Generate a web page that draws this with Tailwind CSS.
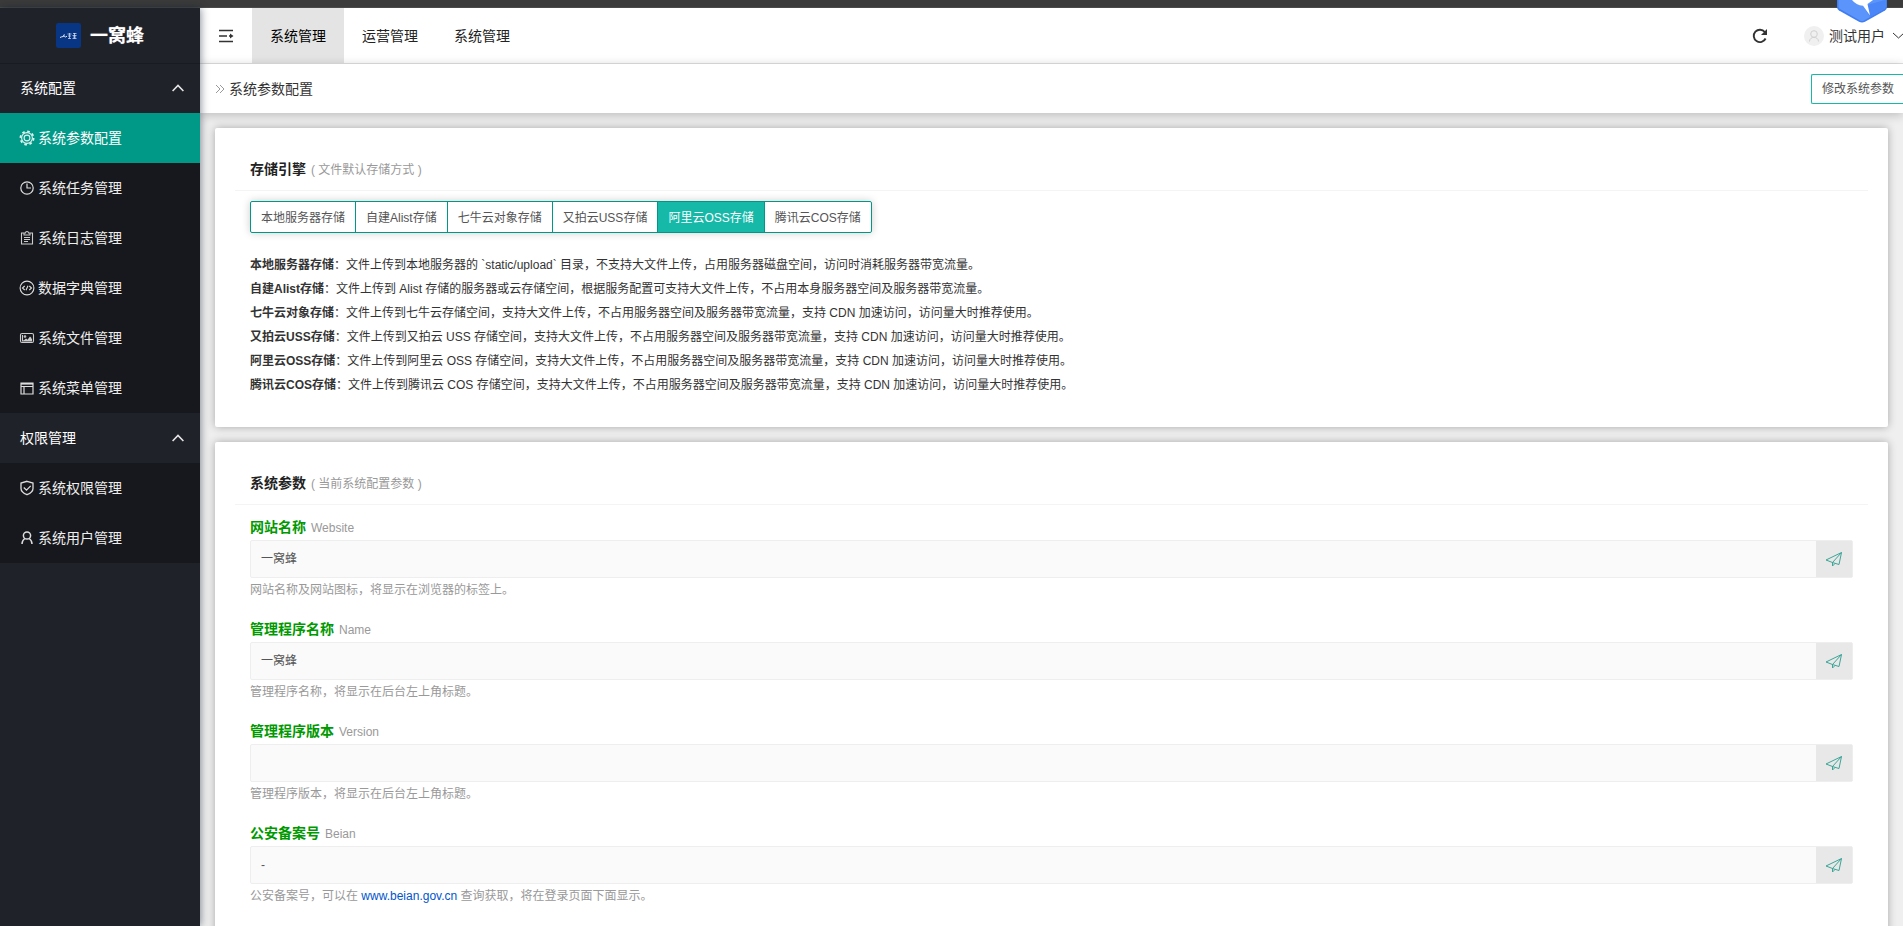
<!DOCTYPE html>
<html lang="zh-CN">
<head>
<meta charset="utf-8">
<title>系统参数配置</title>
<script src="https://cdn.jsdelivr.net/npm/@tailwindcss/browser@4"></script>
</head>
<body class="flex h-screen flex-col overflow-hidden bg-[#efefef] font-['Liberation_Sans','Noto_Sans_CJK_SC',sans-serif] text-xs text-[#333]">
<svg class="hidden">
  <symbol id="plane" viewBox="0 0 18 16" fill="none" stroke="#3da598" stroke-linejoin="round"><path d="M1 9 16.500 1.500 14 13.500 8 11.700zM16.500 1.500 7.500 11.500V15l2.500-2.500"/></symbol>
  <symbol id="up" viewBox="0 0 12 8" fill="none" stroke="#e6e6e7" stroke-width="1.600"><path d="M.6 7 6 1.500 11.400 7"/></symbol>
</svg>

<div class="h-2 shrink-0 border-b border-[#4a4a4a] bg-[#3b3b3b]"></div>

<div class="flex min-h-0 flex-1">
  <aside class="z-20 w-50 shrink-0 bg-[#20222a] text-sm text-[#eee] shadow-[1px_0_8px_rgba(0,21,41,0.45)]">
    <a href="#" class="flex h-14 items-center justify-center gap-[9px] border-b border-[#191b21] text-lg font-bold text-white [text-shadow:0_0_1px_#888]">
      <svg class="size-[25px] rounded-xs bg-[#083584]" viewBox="0 0 25 25" fill="none" stroke="#dfe8f8" stroke-width=".7"><path d="M4 14.500q2-1 3.500-1t2 .5l1.500-.8M7 12.500l2-.7" stroke-width="1"/><path d="M11.500 11h4M12 13h3M13.500 10v5.500M12 15.500h3M17 10.500h3.500M16.500 12.500h4M17 14h3M18.500 10v5.500M16.500 15.500h4"/></svg>
      一窝蜂
    </a>
    <nav class="-mt-px">
      <button class="flex h-[50px] w-full items-center justify-between pr-4 pl-5 text-white">系统配置<svg class="h-2 w-3"><use href="#up"/></svg></button>
      <ul class="bg-[#17181d]">
        <li><a href="#" class="flex h-[50px] items-center gap-[3px] bg-[#009988] px-[19px] text-white">
          <svg class="size-4" viewBox="0 0 16 16" fill="none" stroke="#dff3f1"><circle cx="8" cy="8" r="5.400" stroke-width="1.100"/><circle cx="8" cy="8" r="6.600" stroke-width="1.800" stroke-dasharray="2.600 2.584"/><circle cx="8" cy="8" r="2.900" stroke-width="1.100"/></svg>系统参数配置</a></li>
        <li><a href="#" class="flex h-[50px] items-center gap-[3px] px-[19px]">
          <svg class="size-4" viewBox="0 0 16 16" fill="none" stroke="#ddd" stroke-width="1.200"><circle cx="8" cy="8" r="6.200"/><path d="M8 3.500V8h4"/></svg>系统任务管理</a></li>
        <li><a href="#" class="flex h-[50px] items-center gap-[3px] px-[19px]">
          <svg class="size-4" viewBox="0 0 16 16" fill="none" stroke="#ccc" stroke-width="1.100"><path d="M5 3H2.500v11h11V3H11M5 5V3h1.500a1.500 1.500 0 0 1 3 0H11v2zM5 7.500h6M5 9.500h6M5 11.500h4"/></svg>系统日志管理</a></li>
        <li><a href="#" class="flex h-[50px] items-center gap-[3px] px-[19px]">
          <svg class="size-4" viewBox="0 0 16 16" fill="none" stroke="#ddd" stroke-width="1.100"><circle cx="8" cy="8" r="6.900"/><path d="M5.700 6 3.500 8l2.200 2M10.300 6l2.200 2-2.200 2M9 5.800 7 10.200"/></svg>数据字典管理</a></li>
        <li><a href="#" class="flex h-[50px] items-center gap-[3px] px-[19px]">
          <svg class="size-4" viewBox="0 0 16 16" fill="none" stroke="#ccc" stroke-width="1.100"><rect x="1.500" y="3.500" width="13" height="9" rx="1.500"/><path d="M3.500 5v6h9V9"/><circle cx="6" cy="6.500" r=".8"/><path d="m4 11 3-2.500 1.500 1.200L11 6.500 12.500 8v3z" fill="#ccc" stroke="none"/></svg>系统文件管理</a></li>
        <li><a href="#" class="flex h-[50px] items-center gap-[3px] px-[19px]">
          <svg class="size-4" viewBox="0 0 16 16" fill="none" stroke="#ddd" stroke-width="1.200"><path d="M2 3h12v11H2zM2 6.500h12M5 6.500V14"/><path d="M2 3.800h12" stroke-width="1.600"/></svg>系统菜单管理</a></li>
      </ul>
      <button class="flex h-[50px] w-full items-center justify-between pr-4 pl-5 text-white">权限管理<svg class="h-2 w-3"><use href="#up"/></svg></button>
      <ul class="bg-[#17181d]">
        <li><a href="#" class="flex h-[50px] items-center gap-[3px] px-[19px]">
          <svg class="size-4" viewBox="0 0 16 16" fill="none" stroke="#ddd" stroke-width="1.300"><path d="M8 1.300 14 3v5.500c0 3-3 5-6 6.200-3-1.200-6-3.200-6-6.200V3zM4.800 7.500l2.700 2.600 4.200-4.200"/></svg>系统权限管理</a></li>
        <li><a href="#" class="flex h-[50px] items-center gap-[3px] px-[19px]">
          <svg class="size-4" viewBox="0 0 16 16" fill="none" stroke="#ddd" stroke-width="1.500"><circle cx="8" cy="5.500" r="3.600"/><path d="M5.800 8.500C4 9.800 3 11.500 3 14M10.200 8.500C12 9.800 13 11.500 13 14"/></svg>系统用户管理</a></li>
      </ul>
    </nav>
  </aside>

  <div class="flex min-w-0 flex-1 flex-col">
    <header class="flex h-14 shrink-0 border-b border-[#e2e2e2] bg-white text-sm">
      <button class="flex w-13 items-center justify-center" aria-label="收起菜单">
        <svg class="size-4" viewBox="0 0 16 16" fill="none" stroke="#333" stroke-width="1.400"><path d="M1 2.500h14M1 8h8M1 13.500h14M11 8h2"/><path d="M12 5.500 15.500 8 12 10.500z" fill="#333" stroke="none"/></svg>
      </button>
      <nav class="flex flex-1 text-[#222]">
        <a href="#" class="flex items-center bg-[#e4e4e4] px-[18px] text-black">系统管理</a>
        <a href="#" class="flex items-center px-[18px]">运营管理</a>
        <a href="#" class="flex items-center px-[18px]">系统管理</a>
      </nav>
      <div class="flex items-center">
        <button class="mr-9" aria-label="刷新">
          <svg class="size-4" viewBox="0 0 16 16" fill="none" stroke="#333" stroke-width="1.900"><path d="M13.600 10.500A6.200 6.200 0 1 1 12.800 4"/><path d="M15 1v6H9z" fill="#333" stroke="none"/></svg>
        </button>
        <button class="flex items-center">
          <svg class="mr-[5px] size-5 rounded-full bg-[#f0f0f0]" viewBox="0 0 20 20" fill="none" stroke="#d0d0d0"><circle cx="10" cy="8" r="3.300"/><path d="M5.500 15.500c0-5.500 9-5.500 9 0"/></svg>
          测试用户
          <svg class="ml-2 h-2.5 w-2.5" viewBox="0 0 10 10" fill="none" stroke="#333"><path d="m0 2 5.500 5L11 2"/></svg>
        </button>
      </div>
    </header>

    <div class="z-10 flex h-[49px] shrink-0 items-center justify-between overflow-hidden bg-white pl-[15px] text-sm shadow-[0_2px_10px_rgba(0,0,0,0.22)]">
      <h1 class="flex items-center gap-1">
        <svg class="size-2.5" viewBox="0 0 10 10" fill="none" stroke="#999"><path d="m1 1 4 4-4 4M5 1l4 4-4 4"/></svg>系统参数配置
      </h1>
      <button class="-mr-px h-[30px] rounded-l-xs border border-r-0 border-[#16b8a8] px-[10px] text-xs text-[#555]">修改系统参数</button>
    </div>

    <main class="min-h-0 flex-1 overflow-hidden p-[15px]">
      <section class="rounded-xs bg-white px-5 pt-[26px] pb-[30px] shadow-[0_0_8px_rgba(0,0,0,0.3)]">
        <h2 class="flex h-[37px] items-baseline gap-[5px] border-b border-[#f4f4f4] px-[15px] pt-[5px] text-sm font-bold text-[#222]">存储引擎<small class="text-xs font-normal text-[#999]">( 文件默认存储方式 )</small></h2>
        <div class="px-[15px]">
          <div class="mt-[10px] inline-flex h-8 divide-x divide-[#009688] rounded-xs border border-[#009688] text-[#555] shadow-[0_0_8px_rgba(0,0,0,0.2)]">
            <button class="px-[10px] pt-px">本地服务器存储</button>
            <button class="px-[10px] pt-px">自建Alist存储</button>
            <button class="px-[10px] pt-px">七牛云对象存储</button>
            <button class="px-[10px] pt-px">又拍云USS存储</button>
            <button class="bg-[#16b8a8] px-[10px] pt-px text-white">阿里云OSS存储</button>
            <button class="px-[10px] pt-px">腾讯云COS存储</button>
          </div>
          <div class="mt-5 leading-6">
            <p><b>本地服务器存储</b>：文件上传到本地服务器的 `static/upload` 目录，不支持大文件上传，占用服务器磁盘空间，访问时消耗服务器带宽流量。</p>
            <p><b>自建Alist存储</b>：文件上传到 Alist 存储的服务器或云存储空间，根据服务配置可支持大文件上传，不占用本身服务器空间及服务器带宽流量。</p>
            <p><b>七牛云对象存储</b>：文件上传到七牛云存储空间，支持大文件上传，不占用服务器空间及服务器带宽流量，支持 CDN 加速访问，访问量大时推荐使用。</p>
            <p><b>又拍云USS存储</b>：文件上传到又拍云 USS 存储空间，支持大文件上传，不占用服务器空间及服务器带宽流量，支持 CDN 加速访问，访问量大时推荐使用。</p>
            <p><b>阿里云OSS存储</b>：文件上传到阿里云 OSS 存储空间，支持大文件上传，不占用服务器空间及服务器带宽流量，支持 CDN 加速访问，访问量大时推荐使用。</p>
            <p><b>腾讯云COS存储</b>：文件上传到腾讯云 COS 存储空间，支持大文件上传，不占用服务器空间及服务器带宽流量，支持 CDN 加速访问，访问量大时推荐使用。</p>
          </div>
        </div>
      </section>

      <section class="mt-[15px] rounded-xs bg-white px-5 pt-[26px] pb-[30px] shadow-[0_0_8px_rgba(0,0,0,0.3)]">
        <h2 class="flex h-[37px] items-baseline gap-[5px] border-b border-[#f4f4f4] px-[15px] pt-[5px] text-sm font-bold text-[#222]">系统参数<small class="text-xs font-normal text-[#999]">( 当前系统配置参数 )</small></h2>
        <form class="flex flex-col gap-[19px] px-[15px] pt-3">
          <div>
            <label for="site" class="flex h-[23px] items-baseline gap-[5px] text-sm font-bold text-[#009900]">网站名称<span class="text-xs font-normal text-[#999]">Website</span></label>
            <div class="flex h-[38px] rounded-xs border border-[#eee] bg-[#fafafa]">
              <input id="site" value="一窝蜂" readonly class="min-w-0 flex-1 px-[10px] text-[#555]">
              <button type="button" aria-label="复制" class="flex w-9 items-center justify-center bg-[#e8e8e8]"><svg class="h-4 w-[18px]"><use href="#plane"/></svg></button>
            </div>
            <p class="pt-[3px] leading-[19px] text-[#999]">网站名称及网站图标，将显示在浏览器的标签上。</p>
          </div>
          <div>
            <label for="name" class="flex h-[23px] items-baseline gap-[5px] text-sm font-bold text-[#009900]">管理程序名称<span class="text-xs font-normal text-[#999]">Name</span></label>
            <div class="flex h-[38px] rounded-xs border border-[#eee] bg-[#fafafa]">
              <input id="name" value="一窝蜂" readonly class="min-w-0 flex-1 px-[10px] text-[#555]">
              <button type="button" aria-label="复制" class="flex w-9 items-center justify-center bg-[#e8e8e8]"><svg class="h-4 w-[18px]"><use href="#plane"/></svg></button>
            </div>
            <p class="pt-[3px] leading-[19px] text-[#999]">管理程序名称，将显示在后台左上角标题。</p>
          </div>
          <div>
            <label for="version" class="flex h-[23px] items-baseline gap-[5px] text-sm font-bold text-[#009900]">管理程序版本<span class="text-xs font-normal text-[#999]">Version</span></label>
            <div class="flex h-[38px] rounded-xs border border-[#eee] bg-[#fafafa]">
              <input id="version" value="" readonly class="min-w-0 flex-1 px-[10px] text-[#555]">
              <button type="button" aria-label="复制" class="flex w-9 items-center justify-center bg-[#e8e8e8]"><svg class="h-4 w-[18px]"><use href="#plane"/></svg></button>
            </div>
            <p class="pt-[3px] leading-[19px] text-[#999]">管理程序版本，将显示在后台左上角标题。</p>
          </div>
          <div>
            <label for="beian" class="flex h-[23px] items-baseline gap-[5px] text-sm font-bold text-[#009900]">公安备案号<span class="text-xs font-normal text-[#999]">Beian</span></label>
            <div class="flex h-[38px] rounded-xs border border-[#eee] bg-[#fafafa]">
              <input id="beian" value="-" readonly class="min-w-0 flex-1 px-[10px] text-[#555]">
              <button type="button" aria-label="复制" class="flex w-9 items-center justify-center bg-[#e8e8e8]"><svg class="h-4 w-[18px]"><use href="#plane"/></svg></button>
            </div>
            <p class="pt-[3px] leading-[19px] text-[#999]">公安备案号，可以在 <a href="#" class="text-[#0055cc]">www.beian.gov.cn</a> 查询获取，将在登录页面下面显示。</p>
          </div>
        </form>
      </section>
    </main>
  </div>
</div>

<svg class="absolute top-0 right-4 z-30 h-[23px] w-[50px]" viewBox="0 0 50 23">
  <path d="M0 0h50v7q0 2-2 3.500L28 21.800q-3 1.500-6 0L2 10.500Q0 9 0 7z" fill="#3f7df0"/>
  <path d="M1.500 0h47v6.500q0 1.500-1.500 2.500L27 20.500q-2 1-4 0L3 9Q1.500 8 1.500 6.500z" fill="#5b95fb"/>
  <path d="M26 6 48 0v6.500q0 1.500-1 2.500L33 17z" fill="#4a86f7"/>
  <path d="M15 0q4 5 11 5.800L33 15.500 30.500 4 36 0z" fill="#fff"/>
</svg>
</body>
</html>
